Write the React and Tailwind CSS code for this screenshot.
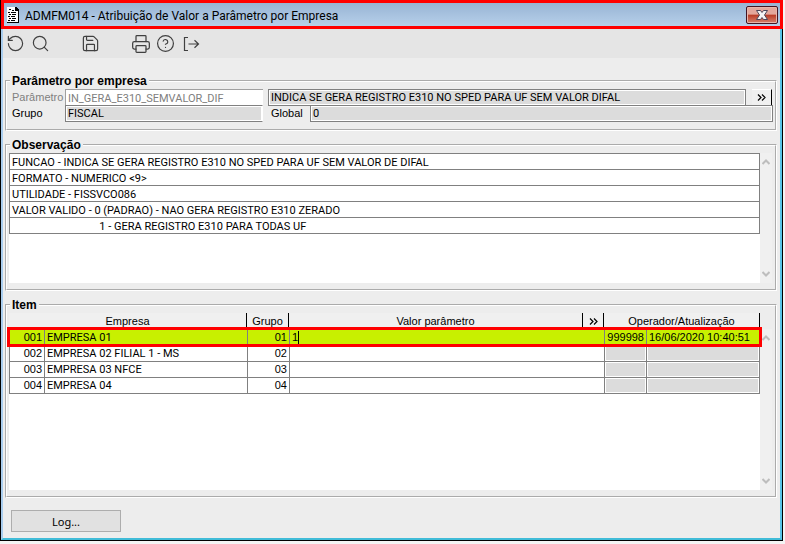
import { RotateCcw, Search, Save, Printer, CircleHelp } from "lucide-react";

const notes = [
  "FUNCAO - INDICA SE GERA REGISTRO E310 NO SPED PARA UF SEM VALOR DE DIFAL",
  "FORMATO - NUMERICO <9>",
  "UTILIDADE - FISSVCO086",
  "VALOR VALIDO - 0 (PADRAO) - NAO GERA REGISTRO E310 ZERADO",
  "                                1 - GERA REGISTRO E310 PARA TODAS UF",
];

const items = [
  {
    code: "001",
    name: "EMPRESA 01",
    group: "01",
    value: "1",
    operator: "999998",
    updated: "16/06/2020 10:40:51",
    selected: true,
  },
  { code: "002", name: "EMPRESA 02 FILIAL 1 - MS", group: "02" },
  { code: "003", name: "EMPRESA 03 NFCE", group: "03" },
  { code: "004", name: "EMPRESA 04", group: "04" },
];

function DocIcon() {
  return (
    <svg width="14" height="16" viewBox="0 0 14 16" shapeRendering="crispEdges">
      <path d="M0 0h9l3 3v13H0z" fill="#fff" />
      <path d="M9 0h1v1h1v1h1v14H0v-1h11V4H8V0z" fill="#000" />
      <path d="M2 2h2v1H2zM5 3h2v1H5zM1 5h2v1H1zM4 5h5v1H4zM2 7h2v1H2zM5 7h4v1H5zM1 9h2v1H1zM4 9h4v1H4zM2 11h2v1H2zM5 11h4v1H5zM1 13h2v1H1zM4 13h4v1H4z" fill="#000" />
    </svg>
  );
}

function CloseIcon() {
  return (
    <svg width="12" height="10" viewBox="0 0 12 10">
      <path
        d="M.5.500h4L6 2.500l1.500-2h4L8.500 5l3 4.500h-4L6 7.500l-1.500 2h-4l3-4.500z"
        fill="#f4f4f4"
        stroke="#4d4658"
        strokeWidth="1"
      />
    </svg>
  );
}

function ExitIcon() {
  return (
    <svg width="18" height="18" viewBox="0 0 18 18" fill="none" stroke="currentColor" strokeWidth="1.2">
      <path d="M6 2.500H2.500v13H6M6.500 9h10M12.500 5.200L16.500 9l-4 3.800" />
    </svg>
  );
}

function DoubleArrow() {
  return (
    <svg width="9" height="7" viewBox="0 0 9 7" fill="none" stroke="#000" strokeWidth="1.2">
      <path d="M1 .5l3 3-3 3M5 .5l3 3-3 3" />
    </svg>
  );
}

function Chevron({ down }) {
  return (
    <svg width="8" height="6" viewBox="0 0 8 6" fill="none" stroke="#bdbdbd" strokeWidth="2">
      <path d={down ? "M.5 1L4 4.500 7.500 1" : "M.5 5L4 1.500 7.500 5"} />
    </svg>
  );
}

function ToolButton({ label, children }) {
  return (
    <button aria-label={label} className="flex h-6 w-[25px] items-center justify-center">
      {children}
    </button>
  );
}

function ScrollBar({ className = "" }) {
  return (
    <div className={`flex w-3 flex-col items-center justify-between bg-[#f0f0f0] py-1.5 ${className}`}>
      <button aria-label="Rolar para cima">
        <Chevron />
      </button>
      <button aria-label="Rolar para baixo">
        <Chevron down />
      </button>
    </div>
  );
}

function Panel({ title, className, children }) {
  return (
    <fieldset className="min-w-0 border-2 border-white [border-style:groove]">
      <legend className="ml-[3px] h-4 px-0.5 text-[12px] leading-4 font-bold">{title}</legend>
      <div className={className}>{children}</div>
    </fieldset>
  );
}

const dataFont = "font-['Roboto',sans-serif]";
const readOnlyField =
  "h-[17px] min-w-0 border border-[#808080] bg-[#dcdcdc] px-0.5 font-['Roboto',sans-serif] text-[11px] shadow-[inset_0_0_0_1px_#fff] outline-none";
const headCell = "border-r border-black p-0 text-center font-normal";
const cell = "border-t border-l border-[#808080] px-0.5 py-0";

export default function App() {
  return (
    <div className="flex min-h-screen flex-col bg-[#f4f4f4] pr-0.5 pb-[3px] font-['Liberation_Sans',Arial,sans-serif] text-[11px] leading-[15px] text-black">
      <div className="flex flex-1 flex-col border-x border-b border-black">
        <header className="-mr-px flex h-[29px] items-center border-[3px] border-[#ff0000] bg-linear-to-b from-[#98b4d4] to-[#b7d0ea] pr-0.5 pl-[3px]">
          <DocIcon />
          <h1 className="ml-1 flex-1 pt-0.5 font-['Roboto',sans-serif] text-[12px] leading-4">
            ADMFM014 - Atribuição de Valor a Parâmetro por Empresa
          </h1>
          <button
            aria-label="Fechar"
            className="flex h-[18px] w-8 items-center justify-center rounded-xs border border-[#431422] bg-linear-to-b from-[#e3a79c] from-45% via-[#b93a24] via-50% to-[#d5806c] shadow-[inset_0_0_0_1px_#e9b5aa]"
          >
            <CloseIcon />
          </button>
        </header>

        <div className="flex flex-1 flex-col border-x-2 border-t-0 border-b-2 border-[#a9cdee] border-r-[#58c4e8] border-b-[#41bcd8] bg-[#ededed]">
          <nav className="flex h-[29px] items-center bg-[#e5e5e5] text-[#404040]">
            <ToolButton label="Desfazer">
              <RotateCcw size={19} strokeWidth={1.5} />
            </ToolButton>
            <ToolButton label="Pesquisar">
              <Search size={19} strokeWidth={1.5} />
            </ToolButton>
            <span className="w-[25px]" />
            <ToolButton label="Salvar">
              <Save size={19} strokeWidth={1.5} />
            </ToolButton>
            <span className="w-[25px]" />
            <ToolButton label="Imprimir">
              <Printer size={20} strokeWidth={1.5} />
            </ToolButton>
            <ToolButton label="Ajuda">
              <CircleHelp size={19} strokeWidth={1.5} />
            </ToolButton>
            <ToolButton label="Sair">
              <ExitIcon />
            </ToolButton>
          </nav>

          <main className="flex flex-1 flex-col gap-1.5 pt-[15px] pr-[3px] pb-[5px] pl-0.5">
            <Panel title="Parâmetro por empresa" className="pr-0.5 pb-[7px] pl-[5px]">
              <div className="flex">
                <label htmlFor="param" className="w-[53px] leading-[17px] text-[#808080]">
                  Parâmetro
                </label>
                <input
                  id="param"
                  readOnly
                  defaultValue="IN_GERA_E310_SEMVALOR_DIF"
                  className={`h-[17px] w-[198px] border-t border-l border-[#a0a0a0] bg-white px-0.5 text-[11px] text-[#808080] outline-none ${dataFont}`}
                />
                <input
                  aria-label="Descrição do parâmetro"
                  readOnly
                  defaultValue="INDICA SE GERA REGISTRO E310 NO SPED PARA UF SEM VALOR DIFAL"
                  className={`${readOnlyField} ml-[5px] flex-1`}
                />
                <button
                  aria-label="Detalhes do parâmetro"
                  className="mr-px ml-1.5 flex h-4 w-5 items-center justify-center border-t border-r border-t-white border-r-black bg-[#f0f0f0]"
                >
                  <DoubleArrow />
                </button>
              </div>
              <div className="-mt-px flex">
                <label htmlFor="grupo" className="w-[53px] leading-[17px]">
                  Grupo
                </label>
                <input
                  id="grupo"
                  readOnly
                  defaultValue="FISCAL"
                  className={`${readOnlyField} w-[198px] border-r-white`}
                />
                <label htmlFor="global" className="ml-2 w-[39px] leading-[17px]">
                  Global
                </label>
                <input id="global" readOnly defaultValue="0" className={`${readOnlyField} flex-1`} />
              </div>
            </Panel>

            <Panel title="Observação" className="pr-[3px] pb-1.5 pl-0.5">
              <div className="flex h-[130px]">
                <div className="flex-1 bg-white">
                  <ul className={`border-r border-b border-l border-[#808080] ${dataFont}`}>
                    {notes.map((note) => (
                      <li key={note} className="h-4 border-t border-[#808080] px-0.5 leading-[17px] whitespace-pre">
                        {note}
                      </li>
                    ))}
                  </ul>
                </div>
                <ScrollBar />
              </div>
            </Panel>

            <Panel title="Item" className="pr-[3px] pb-1.5 pl-0.5">
              <div className="flex h-[177px]">
                <div className="flex-1 bg-white">
                  <table className="w-full table-fixed border-separate border-spacing-0">
                    <colgroup>
                      <col className="w-[35px]" />
                      <col className="w-[203px]" />
                      <col className="w-[42px]" />
                      <col />
                      <col className="w-[21px]" />
                      <col className="w-[42px]" />
                      <col className="w-[114px]" />
                    </colgroup>
                    <thead>
                      <tr className="h-4 bg-[#f0f0f0] leading-4">
                        <th colSpan={2} className={headCell}>Empresa</th>
                        <th className={headCell}>Grupo</th>
                        <th className={headCell}>Valor parâmetro</th>
                        <th className={headCell}>
                          <button aria-label="Detalhes do valor" className="block w-full">
                            <span className="flex justify-center">
                              <DoubleArrow />
                            </span>
                          </button>
                        </th>
                        <th colSpan={2} className={headCell}>Operador/Atualização</th>
                      </tr>
                    </thead>
                    <tbody className="[&>tr:last-child>td]:border-b">
                      {items.map((item) => {
                        const audit = item.selected ? "" : "bg-[#dcdcdc] shadow-[inset_0_0_0_1px_#fff]";
                        return (
                          <tr
                            key={item.code}
                            className={
                              item.selected
                                ? "relative h-4 bg-[#c8f000] outline-[3px] -outline-offset-1 outline-[#ff0000]"
                                : "h-4"
                            }
                          >
                            <td className={`${cell} text-right`}>{item.code}</td>
                            <td className={`${cell} ${dataFont}`}>{item.name}</td>
                            <td className={`${cell} text-right`}>{item.group}</td>
                            <td colSpan={2} className={cell}>
                              <input
                                aria-label={`Valor parâmetro ${item.name}`}
                                defaultValue={item.value}
                                className={
                                  item.selected
                                    ? "block h-[13px] border-r border-black outline-none [field-sizing:content]"
                                    : "block h-[13px] w-full outline-none"
                                }
                              />
                            </td>
                            <td className={`${cell} text-right ${audit}`}>{item.operator}</td>
                            <td className={`${cell} border-r ${audit}`}>{item.updated}</td>
                          </tr>
                        );
                      })}
                    </tbody>
                  </table>
                </div>
                <ScrollBar className="mt-4" />
              </div>
            </Panel>

            <button className="mt-1.5 ml-1.5 h-[22px] w-[110px] border border-[#adadad] bg-[#e1e1e1] font-['Noto_Sans',sans-serif]">
              Log...
            </button>
          </main>
        </div>
      </div>
    </div>
  );
}
